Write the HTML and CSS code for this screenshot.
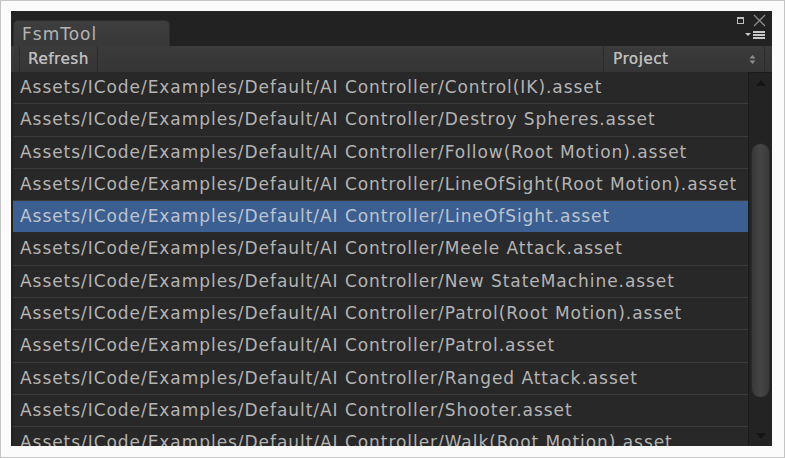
FILE: index.html
```html
<!DOCTYPE html>
<html lang="en">
<head>
    <meta charset="UTF-8">
    <title>FsmTool</title>
    <link rel="stylesheet" href="styles.css">
</head>
<body>
    <div class="frame">
        <div class="window">
            <div class="tabbar">
                <div class="tab">FsmTool</div>
                <div class="win-buttons">
                    <div class="win-top">
                        <span class="maximize"></span>
                        <svg class="close" width="13" height="13" viewBox="0 0 13 13">
                            <path d="M1 1 L12 12 M12 1 L1 12" stroke="#8a8a8a" stroke-width="1.3"/>
                        </svg>
                    </div>
                    <svg class="menu" width="22" height="9" viewBox="0 0 22 9">
                        <path d="M1 3 L7 3 L4 6 Z" fill="#c8c8c8"/>
                        <rect x="9" y="1" width="12" height="2" fill="#c8c8c8"/>
                        <rect x="9" y="4" width="12" height="2" fill="#c8c8c8"/>
                        <rect x="9" y="7" width="12" height="2" fill="#c8c8c8"/>
                    </svg>
                </div>
            </div>
            <div class="toolbar">
                <div class="btn">Refresh</div>
                <div class="spacer"></div>
                <div class="dropdown">
                    <span>Project</span>
                    <svg width="7" height="11" viewBox="0 0 7 11">
                        <path d="M0.5 4.5 L3.5 1 L6.5 4.5 Z M0.5 6.5 L3.5 10 L6.5 6.5 Z" fill="#8c8c8c"/>
                    </svg>
                </div>
            </div>
            <div class="content">
                <div class="list">
                    <div class="row">Assets/ICode/Examples/Default/AI Controller/Control(IK).asset</div>
                    <div class="row">Assets/ICode/Examples/Default/AI Controller/Destroy Spheres.asset</div>
                    <div class="row">Assets/ICode/Examples/Default/AI Controller/Follow(Root Motion).asset</div>
                    <div class="row">Assets/ICode/Examples/Default/AI Controller/LineOfSight(Root Motion).asset</div>
                    <div class="row selected">Assets/ICode/Examples/Default/AI Controller/LineOfSight.asset</div>
                    <div class="row">Assets/ICode/Examples/Default/AI Controller/Meele Attack.asset</div>
                    <div class="row">Assets/ICode/Examples/Default/AI Controller/New StateMachine.asset</div>
                    <div class="row">Assets/ICode/Examples/Default/AI Controller/Patrol(Root Motion).asset</div>
                    <div class="row">Assets/ICode/Examples/Default/AI Controller/Patrol.asset</div>
                    <div class="row">Assets/ICode/Examples/Default/AI Controller/Ranged Attack.asset</div>
                    <div class="row">Assets/ICode/Examples/Default/AI Controller/Shooter.asset</div>
                    <div class="row">Assets/ICode/Examples/Default/AI Controller/Walk(Root Motion).asset</div>
                </div>
                <div class="scrollbar">
                    <svg class="arrow" width="12" height="8" viewBox="0 0 12 8">
                        <path d="M1 7 L6 1 L11 7 Z" fill="#151515"/>
                    </svg>
                    <div class="track">
                        <div class="thumb"></div>
                    </div>
                    <svg class="arrow" width="12" height="8" viewBox="0 0 12 8">
                        <path d="M1 1 L6 7 L11 1 Z" fill="#151515"/>
                    </svg>
                </div>
            </div>
        </div>
    </div>
</body>
</html>
```

FILE: styles.css
```css
html, body {
    margin: 0;
    height: 100%;
}
body {
    background-color: #ffffff;
    font-family: 'DejaVu Sans', sans-serif;
    overflow: hidden;
}
.frame {
    width: 785px;
    height: 458px;
    box-sizing: border-box;
    border: 1px solid #c4c4c4;
    padding: 10px 12px 11px 10px;
    background: #fbfbfb;
}
.window {
    height: 100%;
    background-color: #222222;
    display: flex;
    flex-direction: column;
    overflow: hidden;
}

/* tab strip */
.tabbar {
    height: 35px;
    display: flex;
    align-items: flex-end;
    padding-left: 2px;
    position: relative;
}
.tab {
    width: 157px;
    height: 26px;
    box-sizing: border-box;
    padding-left: 8px;
    line-height: 26px;
    font-size: 17px;
    letter-spacing: 1px;
    color: #b4b4b4;
    background: linear-gradient(#3e3e3e, #383838);
    border-radius: 5px 5px 0 0;
    border: 1px solid #2c2c2c;
    border-bottom: none;
}
.win-buttons {
    position: absolute;
    right: 6px;
    top: 3px;
    display: flex;
    flex-direction: column;
    align-items: flex-end;
}
.win-top {
    display: flex;
    align-items: center;
    gap: 9px;
}
.maximize {
    width: 5px;
    height: 4px;
    border: 1px solid #c0c0c0;
    border-top-width: 2px;
}
.menu {
    margin-top: 3px;
}

/* toolbar */
.toolbar {
    height: 27px;
    display: flex;
    background: linear-gradient(#3b3b3b, #353535);
    border-bottom: 1px solid #1c1c1c;
    padding-left: 8px;
    padding-right: 7px;
    box-sizing: border-box;
}
.btn {
    width: 79px;
    box-sizing: border-box;
    padding-left: 8px;
    font-size: 15px;
    letter-spacing: 0.6px;
    line-height: 27px;
    color: #bdbdbd;
    text-shadow: 0.3px 0 0 #bdbdbd;
    border-left: 1px solid #2b2b2b;
    border-right: 1px solid #2b2b2b;
}
.spacer {
    flex: 1;
}
.dropdown {
    width: 162px;
    box-sizing: border-box;
    padding: 0 8px 0 9px;
    display: flex;
    align-items: center;
    justify-content: space-between;
    font-size: 15px;
    letter-spacing: 0.6px;
    color: #bdbdbd;
    text-shadow: 0.3px 0 0 #bdbdbd;
    border-left: 1px solid #2b2b2b;
    border-right: 1px solid #2b2b2b;
}

/* file list */
.content {
    flex: 1;
    display: flex;
    min-height: 0;
    padding-left: 2px;
}
.list {
    flex: 1;
    overflow: hidden;
    margin-top: -1px;
}
.row {
    height: 32.3px;
    box-sizing: border-box;
    padding-left: 7px;
    line-height: 31px;
    font-size: 17px;
    letter-spacing: 0.95px;
    color: #b4b4b4;
    background-color: #282828;
    border-bottom: 1.3px solid #3a3a3a;
    white-space: nowrap;
}
.row.selected {
    background-color: #3c5f91;
    color: #bcc4d0;
    border-bottom-color: #2a2a2a;
}
.scrollbar {
    width: 23px;
    display: flex;
    flex-direction: column;
    align-items: center;
    background-color: #232323;
    border-left: 1px solid #1a1a1a;
}
.arrow {
    flex: none;
    margin: 6px 0;
}
.track {
    flex: 1;
    width: 100%;
    display: flex;
    flex-direction: column;
    padding: 50px 2px 28px;
    box-sizing: border-box;
}
.thumb {
    flex: 1;
    border-radius: 10px;
    background: linear-gradient(90deg, #383838, #454545 50%, #3a3a3a);
    border: 1px solid #2a2a2a;
}
```
